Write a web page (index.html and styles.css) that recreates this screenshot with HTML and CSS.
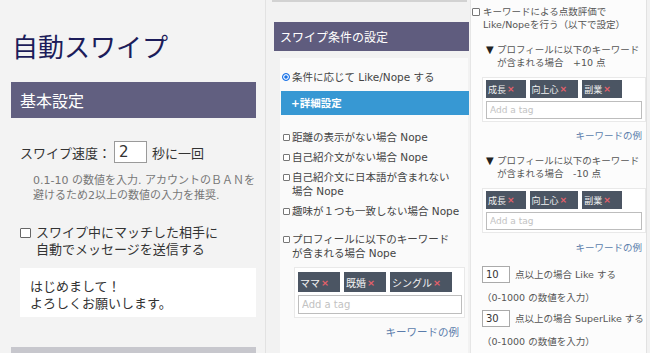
FILE: index.html
```html
<!DOCTYPE html>
<html lang="ja">
<head>
<meta charset="utf-8">
<title>自動スワイプ</title>
<link rel="stylesheet" href="styles.css">
</head>
<body>
<div class="page">
  <section class="col col-basic">
    <h1 class="app-title">自動スワイプ</h1>
    <h2 class="sec-head sec-head-lg">基本設定</h2>
    <div class="speed-row">
      <span>スワイプ速度：</span>
      <input class="num-input num-input-lg" type="text" value="2">
      <span class="speed-unit">秒に一回</span>
    </div>
    <p class="help">0.1-10 の数値を入力. アカウントのＢＡＮを<br>避けるため2以上の数値の入力を推奨.</p>
    <div class="check-row check-lg">
      <span class="cbox cbox-lg"></span>
      <span>スワイプ中にマッチした相手に<br>自動でメッセージを送信する</span>
    </div>
    <div class="msg-box">はじめまして！<br>よろしくお願いします。</div>
    <div class="next-head"></div>
  </section>

  <section class="col col-cond">
    <div class="top-rule"></div>
    <h2 class="sec-head sec-head-sm">スワイプ条件の設定</h2>
    <div class="cond-card">
      <div class="radio-row"><span class="radio"></span><span>条件に応じて Like/Nope する</span></div>
      <div class="detail-bar">+詳細設定</div>
      <div class="check-row check-sm"><span class="cbox"></span><span>距離の表示がない場合 Nope</span></div>
      <div class="check-row check-sm"><span class="cbox"></span><span>自己紹介文がない場合 Nope</span></div>
      <div class="check-row check-sm"><span class="cbox"></span><span>自己紹介文に日本語が含まれない<br>場合 Nope</span></div>
      <div class="check-row check-sm"><span class="cbox"></span><span>趣味が１つも一致しない場合 Nope</span></div>
      <div class="check-row check-sm kw-item"><span class="cbox"></span><span>プロフィールに以下のキーワード<br>が含まれる場合 Nope</span></div>
      <div class="tag-box tag-box-md">
        <div class="tags">
          <span class="tag">ママ<span class="tag-x">×</span></span>
          <span class="tag">既婚<span class="tag-x">×</span></span>
          <span class="tag">シングル<span class="tag-x">×</span></span>
        </div>
        <input class="tag-input" type="text" placeholder="Add a tag">
      </div>
      <div class="kw-link kw-link-md">キーワードの例</div>
    </div>
  </section>

  <section class="col col-score">
    <div class="score-card">
      <div class="check-row check-xs"><span class="cbox cbox-xs"></span><span>キーワードによる点数評価で<br>Like/Nopeを行う（以下で設定）</span></div>

      <div class="kw-head"><span class="tri">▼</span><span>プロフィールに以下のキーワード<br>が含まれる場合　+10 点</span></div>
      <div class="tag-box tag-box-sm">
        <div class="tags">
          <span class="tag">成長<span class="tag-x">×</span></span>
          <span class="tag">向上心<span class="tag-x">×</span></span>
          <span class="tag">副業<span class="tag-x">×</span></span>
        </div>
        <input class="tag-input" type="text" placeholder="Add a tag">
      </div>
      <div class="kw-link kw-link-sm">キーワードの例</div>

      <div class="kw-head kw-head-2"><span class="tri">▼</span><span>プロフィールに以下のキーワード<br>が含まれる場合　-10 点</span></div>
      <div class="tag-box tag-box-sm tag-box-2">
        <div class="tags">
          <span class="tag">成長<span class="tag-x">×</span></span>
          <span class="tag">向上心<span class="tag-x">×</span></span>
          <span class="tag">副業<span class="tag-x">×</span></span>
        </div>
        <input class="tag-input" type="text" placeholder="Add a tag">
      </div>
      <div class="kw-link kw-link-sm kw-link-2">キーワードの例</div>

      <div class="thr-row"><input class="num-input num-input-sm" type="text" value="10"><span>点以上の場合 Like する</span></div>
      <p class="note">（0-1000 の数値を入力）</p>
      <div class="thr-row thr-row-2"><input class="num-input num-input-sm" type="text" value="30"><span>点以上の場合 SuperLike する</span></div>
      <p class="note">（0-1000 の数値を入力）</p>
    </div>
  </section>
</div>
</body>
</html>
```

FILE: styles.css
```css
* { box-sizing: border-box; }

html, body {
  margin: 0;
  padding: 0;
  height: 100%;
}

body {
  background: #f2f2f2;
  font-family: "DejaVu Sans", "Noto Sans CJK JP", sans-serif;
  color: #333;
  overflow: hidden;
}

.page {
  display: flex;
  height: 353px;
  overflow: hidden;
}

.col {
  display: flex;
  flex-direction: column;
  min-width: 0;
}

/* ---------- column 1 ---------- */
.col-basic {
  width: 266px;
  flex: 0 0 266px;
  padding: 0 9px 0 11px;
  background: #f3f3f3;
  border-right: 1px solid #e2e2e2;
}

.app-title {
  margin: 31px 0 0 1px;
  font-size: 26px;
  line-height: 30px;
  font-weight: 400;
  color: #1c1c5a;
  font-family: "Noto Sans CJK JP", sans-serif;
}

.sec-head {
  margin: 0;
  font-weight: 400;
  color: #fff;
  background: #615f80;
  font-family: "Noto Sans CJK JP", sans-serif;
}

.sec-head-lg {
  margin-top: 21px;
  height: 36px;
  line-height: 36px;
  padding-left: 9px;
  font-size: 16px;
}

.speed-row {
  display: flex;
  align-items: center;
  height: 22px;
  margin-top: 23px;
  padding-left: 9px;
  font-size: 13px;
  color: #333;
}

.num-input {
  font-family: "DejaVu Sans", "Noto Sans CJK JP", sans-serif;
  background: #fff;
  border: 1px solid #9a9a9a;
  border-radius: 0;
  margin: 0;
  color: #333;
  outline: none;
}

.num-input-lg {
  width: 33px;
  height: 22px;
  margin-left: 3px;
  padding: 0 0 0 4px;
  font-size: 15px;
}

.speed-unit { margin-left: 5px; }

.help {
  margin: 10px 0 0;
  padding-left: 22px;
  font-size: 11px;
  line-height: 15px;
  color: #777;
}

.check-row {
  display: flex;
  align-items: flex-start;
}

.cbox {
  flex: none;
  display: inline-block;
  width: 7px;
  height: 7px;
  border: 1px solid #777;
  border-radius: 1px;
  background: #fff;
}

.check-lg {
  margin-top: 21px;
  padding-left: 9px;
  font-size: 13px;
  line-height: 17px;
  color: #333;
}

.cbox-lg {
  width: 11px;
  height: 10px;
  margin: 4px 5px 0 0;
  border-color: #666;
}

.msg-box {
  margin: 10px 0 0 9px;
  height: 54px;
  padding: 10px 0 0 10px;
  background: #fff;
  font-size: 13px;
  line-height: 17px;
  color: #333;
}

.next-head {
  margin-top: 30px;
  height: 6px;
  flex: none;
  background: #c7c7cd;
}

/* ---------- column 2 ---------- */
.col-cond {
  width: 203px;
  flex: 0 0 203px;
  background: #f2f2f2;
}

.top-rule {
  height: 2px;
  margin: 0 2px 0 6px;
  background: #d2d2d2;
}

.sec-head-sm {
  margin: 20px 0 0 8px;
  height: 29px;
  line-height: 29px;
  padding-left: 6px;
  font-size: 12px;
  background: #5f5c7e;
}

.cond-card {
  flex: 1;
  margin: 7px 1px 0 14px;
  padding: 12px 0 0;
  background: #fafafa;
  font-size: 10.5px;
  color: #444;
}

.radio-row {
  display: flex;
  align-items: center;
  height: 14px;
  line-height: 14px;
  padding-left: 2px;
}

.radio {
  flex: none;
  width: 8px;
  height: 8px;
  margin-right: 2px;
  border-radius: 50%;
  background: #1a73e8;
  border: 1px solid #1a73e8;
  box-shadow: inset 0 0 0 1.2px #fff;
}

.detail-bar {
  margin: 7px -1px 0 1px;
  height: 24px;
  line-height: 24px;
  padding-left: 10px;
  background: #3798d3;
  color: #fff;
  font-weight: 700;
  font-size: 10.5px;
}

.check-sm {
  margin: 6px 0 0 3px;
  line-height: 14px;
}

.detail-bar + .check-sm { margin-top: 15px; }

.check-sm .cbox {
  margin: 4px 2px 0 0;
}

.check-sm.kw-item { margin-top: 14px; }

.tag-box {
  background: #fff;
  border: 1px solid #e9e9e9;
}

.tags {
  display: flex;
  gap: 4px;
}

.tag {
  display: inline-flex;
  align-items: center;
  background: #4b5563;
  color: #f2f2f2;
  font-family: "Noto Sans CJK JP", sans-serif;
}

.tag-x {
  color: #e6606a;
  font-weight: 700;
  margin-left: 1px;
  font-family: "DejaVu Sans", sans-serif;
}

.tag-input {
  display: block;
  width: 100%;
  margin: 3px 0 0;
  padding: 0 0 0 3px;
  border: 1px solid #bdbdbd;
  border-radius: 0;
  background: #fff;
  outline: none;
  font-family: "DejaVu Sans", sans-serif;
}

.tag-input::placeholder { color: #c2c2c2; }

.tag-box-md {
  margin: 7px 3px 0 14px;
  padding: 4px 2px 3px 3px;
}

.tag-box-md .tag {
  height: 20px;
  padding: 0 11px 0 2px;
  font-size: 10px;
}

.tag-box-md .tag-x { font-size: 9.5px; }

.tag-box-md .tag-input {
  height: 19px;
  font-size: 10px;
}

.kw-link {
  text-align: right;
  color: #5a7cab;
  font-family: "Noto Sans CJK JP", sans-serif;
}

.kw-link-md {
  margin-top: 7px;
  padding-right: 9px;
  font-size: 10.5px;
  line-height: 14px;
}

/* ---------- column 3 ---------- */
.col-score {
  flex: 1;
  padding: 0 3px 0 1px;
  background: #f2f2f2;
}

.score-card {
  flex: 1;
  padding: 5px 0 0 1px;
  background: #fcfcfc;
  border-right: 1px solid #e2e2e2;
  border-left: 1px solid #e6e6e6;
  font-size: 9.5px;
  line-height: 13px;
  color: #555;
}

.check-xs .cbox-xs {
  width: 8px;
  height: 8px;
  margin: 3px 3px 0 0;
}

.kw-head {
  display: flex;
  margin: 12px 0 0 14px;
  color: #555;
}

.tri {
  flex: none;
  width: 11px;
  color: #222;
  font-size: 10px;
}

.tag-box-sm {
  margin: 8px 0 0 10px;
  padding: 2px 3px 2px 3px;
}

.tag-box-sm .tag {
  height: 18px;
  padding: 0 11px 0 2px;
  font-size: 9px;
}

.tag-box-sm .tag-x { font-size: 9px; }

.tag-box-sm .tag-input {
  height: 18px;
  font-size: 9px;
}

.kw-link-sm {
  margin-top: 7px;
  padding-right: 4px;
  font-size: 9.5px;
}

.kw-head-2 { margin-top: 12px; }
.tag-box-2 { margin-top: 8px; }
.kw-link-2 { margin-top: 8px; }

.thr-row {
  display: flex;
  align-items: center;
  margin: 12px 0 0 10px;
  height: 17px;
}

.thr-row-2 { margin-top: 6px; }

.num-input-sm {
  width: 28px;
  height: 17px;
  margin-right: 5px;
  padding: 0 0 0 3px;
  font-size: 10px;
  border-color: #aaa;
}

.note {
  margin: 8px 0 0 10px;
  font-size: 9.5px;
  line-height: 13px;
}
```
